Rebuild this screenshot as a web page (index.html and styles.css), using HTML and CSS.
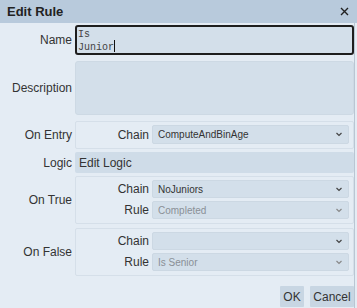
FILE: index.html
```html
<!DOCTYPE html>
<html lang="en">
<head>
    <meta charset="UTF-8">
    <meta name="viewport" content="width=device-width, initial-scale=1.0">
    <title>Edit Rule</title>
    <link rel="stylesheet" href="styles.css">
</head>
<body>
    <div class="dialog">
        <div class="titlebar">
            <span class="title">Edit Rule</span>
            <svg class="close" width="9" height="9" viewBox="0 0 9 9"><path d="M1 1l7 7M8 1l-7 7" stroke="#222" stroke-width="1.4"/></svg>
        </div>
        <div class="content">
            <div class="row row-name">
                <label class="label">Name</label>
                <div class="textarea name-box">Is<br>Junior<span class="caret"></span></div>
            </div>
            <div class="row row-desc">
                <label class="label">Description</label>
                <div class="textarea desc-box"></div>
            </div>
            <div class="row row-entry">
                <label class="label">On Entry</label>
                <div class="group">
                    <div class="field">
                        <span class="sublabel">Chain</span>
                        <div class="select"><span>ComputeAndBinAge</span><svg width="8" height="5" viewBox="0 0 8 5"><path d="M1.5 1l2.5 2.5 2.5-2.5" fill="none" stroke="#444" stroke-width="1.2"/></svg></div>
                    </div>
                </div>
            </div>
            <div class="row row-logic">
                <label class="label">Logic</label>
                <div class="logic">Edit Logic</div>
            </div>
            <div class="row row-true">
                <label class="label">On True</label>
                <div class="group">
                    <div class="field">
                        <span class="sublabel">Chain</span>
                        <div class="select"><span>NoJuniors</span><svg width="8" height="5" viewBox="0 0 8 5"><path d="M1.5 1l2.5 2.5 2.5-2.5" fill="none" stroke="#444" stroke-width="1.2"/></svg></div>
                    </div>
                    <div class="field">
                        <span class="sublabel">Rule</span>
                        <div class="select disabled"><span>Completed</span><svg width="8" height="5" viewBox="0 0 8 5"><path d="M1.5 1l2.5 2.5 2.5-2.5" fill="none" stroke="#888" stroke-width="1.2"/></svg></div>
                    </div>
                </div>
            </div>
            <div class="row row-false">
                <label class="label">On False</label>
                <div class="group">
                    <div class="field">
                        <span class="sublabel">Chain</span>
                        <div class="select"><span></span><svg width="8" height="5" viewBox="0 0 8 5"><path d="M1.5 1l2.5 2.5 2.5-2.5" fill="none" stroke="#444" stroke-width="1.2"/></svg></div>
                    </div>
                    <div class="field">
                        <span class="sublabel">Rule</span>
                        <div class="select disabled"><span>Is Senior</span><svg width="8" height="5" viewBox="0 0 8 5"><path d="M1.5 1l2.5 2.5 2.5-2.5" fill="none" stroke="#888" stroke-width="1.2"/></svg></div>
                    </div>
                </div>
            </div>
            <div class="buttons">
                <button class="btn btn-ok">OK</button>
                <button class="btn btn-cancel">Cancel</button>
            </div>
        </div>
    </div>
</body>
</html>
```

FILE: styles.css
```css
html, body {
    margin: 0;
    padding: 0;
}
body {
    font-family: "Liberation Sans", Arial, sans-serif;
    font-size: 12px;
    color: #333;
    background: #e4ecf4;
    width: 357px;
    height: 308px;
    overflow: hidden;
}
.dialog {
    height: 308px;
    display: flex;
    flex-direction: column;
}
.titlebar {
    height: 23px;
    background: #b8cadc;
    display: flex;
    align-items: center;
    justify-content: space-between;
    padding: 0 8px 0 7px;
}
.title {
    font-weight: bold;
    font-size: 13px;
    color: #222;
}
.content {
    flex: 1;
    border-right: 1px solid #b9c6d3;
    width: 354px;
    padding-top: 2px;
}
.row {
    display: grid;
    grid-template-columns: 72px 1fr;
    column-gap: 3px;
    align-items: center;
}
.label {
    text-align: right;
    font-size: 12px;
    color: #333;
}
.row-desc, .row-entry {
    margin-top: 6px;
}
.row-logic, .row-true {
    margin-top: 3px;
}
.row-false {
    margin-top: 4px;
}
.textarea {
    background: #d3dfea;
    border-radius: 3px;
    box-sizing: border-box;
}
.name-box {
    height: 30px;
    border: 2px solid #1e1e1e;
    font-family: "Liberation Mono", "DejaVu Sans Mono", monospace;
    font-size: 10px;
    line-height: 11px;
    padding: 2px 1px;
    color: #444;
}
.caret {
    display: inline-block;
    width: 1px;
    height: 12px;
    background: #111;
    vertical-align: -2px;
}
.desc-box {
    height: 54px;
    border: 1px solid #cdd9e4;
}
.group {
    border: 1px solid #d5dfe9;
    border-radius: 2px;
    padding: 3px 4px 4px 0;
    display: flex;
    flex-direction: column;
    gap: 3px;
}
.field {
    display: grid;
    grid-template-columns: 73px 1fr;
    column-gap: 3px;
    align-items: center;
}
.sublabel {
    text-align: right;
    font-size: 12px;
}
.select {
    height: 18px;
    box-sizing: border-box;
    background: #d3dfea;
    border: 1px solid #ccd8e3;
    border-radius: 2px;
    display: flex;
    align-items: center;
    justify-content: space-between;
    padding: 0 5px 0 5px;
    font-size: 10px;
    color: #333;
}
.row-entry .select {
    height: 19px;
}
.select.disabled {
    color: #8a8f96;
}
.logic {
    height: 21px;
    background: #cfdce8;
    border-radius: 2px;
    display: flex;
    align-items: center;
    padding-left: 4px;
    font-size: 12px;
    color: #333;
}
.buttons {
    display: flex;
    justify-content: flex-end;
    gap: 6px;
    margin-top: 10px;
}
.btn {
    font-family: "Liberation Sans", Arial, sans-serif;
    font-size: 12px;
    color: #333;
    background: #c8d6e3;
    border: none;
    border-radius: 1px;
    height: 21px;
    padding: 0 2px;
}
.btn-ok {
    width: 24px;
}
.btn-cancel {
    width: 44px;
}
```
